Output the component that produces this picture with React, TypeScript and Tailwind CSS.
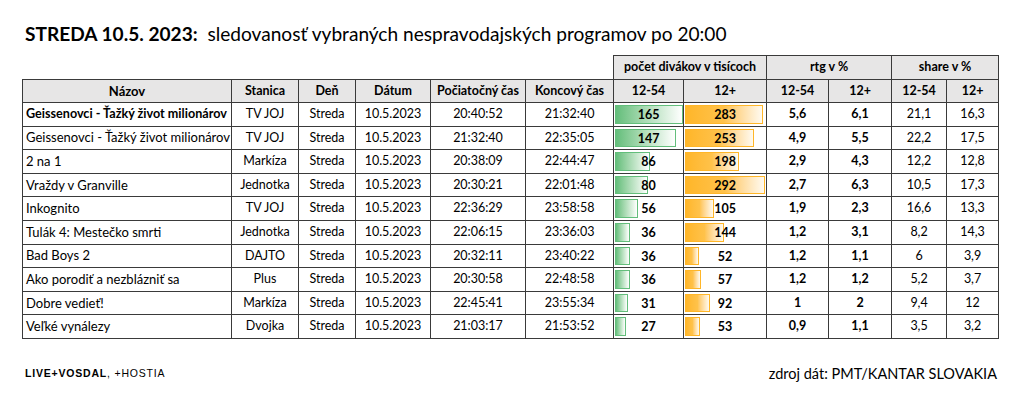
import React from "react";

type Row = {
  name: string;
  station: string;
  start: string;
  end: string;
  v1: number;
  v2: number;
  r1: string;
  r2: string;
  s1: string;
  s2: string;
  bold?: boolean;
};

const rows: Row[] = [
  { name: "Geissenovci - Ťažký život milionárov", station: "TV JOJ", start: "20:40:52", end: "21:32:40", v1: 165, v2: 283, r1: "5,6", r2: "6,1", s1: "21,1", s2: "16,3", bold: true },
  { name: "Geissenovci - Ťažký život milionárov", station: "TV JOJ", start: "21:32:40", end: "22:35:05", v1: 147, v2: 253, r1: "4,9", r2: "5,5", s1: "22,2", s2: "17,5" },
  { name: "2 na 1", station: "Markíza", start: "20:38:09", end: "22:44:47", v1: 86, v2: 198, r1: "2,9", r2: "4,3", s1: "12,2", s2: "12,8" },
  { name: "Vraždy v Granville", station: "Jednotka", start: "20:30:21", end: "22:01:48", v1: 80, v2: 292, r1: "2,7", r2: "6,3", s1: "10,5", s2: "17,3" },
  { name: "Inkognito", station: "TV JOJ", start: "22:36:29", end: "23:58:58", v1: 56, v2: 105, r1: "1,9", r2: "2,3", s1: "16,6", s2: "13,3" },
  { name: "Tulák 4: Mestečko smrti", station: "Jednotka", start: "22:06:15", end: "23:36:03", v1: 36, v2: 144, r1: "1,2", r2: "3,1", s1: "8,2", s2: "14,3" },
  { name: "Bad Boys 2", station: "DAJTO", start: "20:32:11", end: "23:40:22", v1: 36, v2: 52, r1: "1,2", r2: "1,1", s1: "6", s2: "3,9" },
  { name: "Ako porodiť a nezblázniť sa", station: "Plus", start: "20:30:58", end: "22:48:58", v1: 36, v2: 57, r1: "1,2", r2: "1,2", s1: "5,2", s2: "3,7" },
  { name: "Dobre vedieť!", station: "Markíza", start: "22:45:41", end: "23:55:34", v1: 31, v2: 92, r1: "1", r2: "2", s1: "9,4", s2: "12" },
  { name: "Veľké vynálezy", station: "Dvojka", start: "21:03:17", end: "21:53:52", v1: 27, v2: 53, r1: "0,9", r2: "1,1", s1: "3,5", s2: "3,2" },
];

const cell = "border border-[#3a3a3a] h-[23.6px] p-0 text-center align-middle";
const head = "border border-[#3a3a3a] bg-[#e7e6e6] p-0 text-center align-middle font-bold";

function Bar({ value, max, full, green }: { value: number; max: number; full: number; green: boolean }) {
  const w = Math.round((value / max) * full);
  return (
    <td className={`${cell} relative font-bold`}>
      <div
        className={
          green
            ? "absolute left-[1px] top-[2px] bottom-[2px] border border-[#63be7b] bg-gradient-to-r from-[#63be7b] to-white"
            : "absolute left-[1px] top-[2px] bottom-[2px] border border-[#ffb628] bg-gradient-to-r from-[#ffb628] via-[#ffc24a] to-[#fffaf0]"
        }
        style={{ width: w }}
      />
      <span className="relative top-[1px]">{value}</span>
    </td>
  );
}

export default function App() {
  return (
    <div className="h-[408px] w-[1024px] overflow-hidden bg-white pl-[22px] text-black" style={{ fontFamily: "Lato, 'Open Sans', sans-serif" }}>
      <div className="h-[55px] pl-[3px] pt-[23px] text-[19.1px] leading-[22px] whitespace-pre">
        <span className="font-bold">STREDA 10.5. 2023:</span>
        <span>  sledovanosť vybraných nespravodajských programov po 20:00</span>
      </div>

      <table className="w-[976px] table-fixed border-collapse text-[12.5px] leading-none">
        <colgroup>
          <col className="w-[209px]" />
          <col className="w-[67px]" />
          <col className="w-[57px]" />
          <col className="w-[75px]" />
          <col className="w-[95px]" />
          <col className="w-[88px]" />
          <col className="w-[70px]" />
          <col className="w-[83px]" />
          <col className="w-[62px]" />
          <col className="w-[63px]" />
          <col className="w-[55px]" />
          <col className="w-[52px]" />
        </colgroup>
        <thead>
          <tr className="h-[24px]">
            <th colSpan={6} className="p-0" />
            <th colSpan={2} className={head}>počet divákov v tisícoch</th>
            <th colSpan={2} className={head}>rtg v %</th>
            <th colSpan={2} className={head}>share v %</th>
          </tr>
          <tr className="h-[23px]">
            <th className={`${head} text-[13px]`}>Názov</th>
            <th className={head}>Stanica</th>
            <th className={head}>Deň</th>
            <th className={head}>Dátum</th>
            <th className={head}>Počiatočný čas</th>
            <th className={head}>Koncový čas</th>
            <th className={head}>12-54</th>
            <th className={head}>12+</th>
            <th className={head}>12-54</th>
            <th className={`${head} border-l-[#7f7f7f]`}>12+</th>
            <th className={head}>12-54</th>
            <th className={head}>12+</th>
          </tr>
        </thead>
        <tbody>
          {rows.map((r, i) => (
            <tr key={i}>
              <td className={`${cell} !text-left pl-[3px] whitespace-nowrap ${r.bold ? "font-bold text-[12.6px]" : "text-[13px]"}`}>{r.name}</td>
              <td className={cell}>{r.station}</td>
              <td className={cell}>Streda</td>
              <td className={cell}>10.5.2023</td>
              <td className={cell}>{r.start}</td>
              <td className={cell}>{r.end}</td>
              <Bar value={r.v1} max={165} full={68} green />
              <Bar value={r.v2} max={292} full={80} green={false} />
              <td className={`${cell} font-bold`}>{r.r1}</td>
              <td className={`${cell} border-l-[#7f7f7f] font-bold`}>{r.r2}</td>
              <td className={cell}>{r.s1}</td>
              <td className={cell}>{r.s2}</td>
            </tr>
          ))}
        </tbody>
      </table>

      <div className="mt-[24px] flex items-center justify-between pl-[3px] pr-[27px]">
        <div className="text-[10.5px] tracking-[0.8px]" style={{ fontFamily: "'Liberation Sans', Arial, sans-serif" }}>
          <span className="font-bold">LIVE+VOSDAL</span>
          <span>, +HOSTIA</span>
        </div>
        <div className="text-[14.5px]">zdroj dát: PMT/KANTAR SLOVAKIA</div>
      </div>
    </div>
  );
}
